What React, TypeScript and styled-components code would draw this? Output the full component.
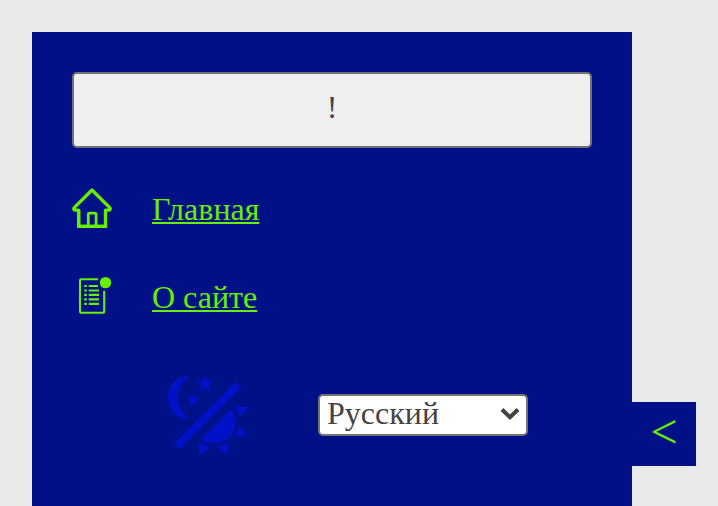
import React from "react";
import styled, { createGlobalStyle } from "styled-components";

const GlobalStyle = createGlobalStyle`
  *, *::before, *::after { box-sizing: border-box; }
  body {
    margin: 0;
    background: #eaeaea;
    font-family: "Liberation Serif", "Times New Roman", serif;
    font-size: 32px;
    color: #444;
    overflow: hidden;
  }
`;

const Page = styled.div`
  display: flex;
  align-items: flex-start;
  height: 506px;
  padding: 32px 0 0 32px;
`;

const Panel = styled.aside`
  display: flex;
  flex-direction: column;
  gap: 40px;
  width: 600px;
  height: 474px;
  padding: 40px;
  background: #001087;
`;

const AlertButton = styled.button`
  flex: none;
  height: 76px;
  padding: 0 0 6px;
  border: 2px solid #737373;
  border-radius: 5px;
  background: #efefef;
  color: #444;
  font: inherit;
`;

const Nav = styled.nav`
  display: flex;
  flex-direction: column;
  gap: 48px;
  color: #66f000;
`;

const NavRow = styled.div`
  display: flex;
  align-items: center;
  gap: 40px;
  height: 40px;

  svg { display: block; flex: none; }
`;

const NavLink = styled.a`
  color: inherit;
  line-height: 36px;
  padding-top: 2px;
  text-decoration-thickness: 2px;
  text-underline-offset: 2px;
`;

const Settings = styled.div`
  display: flex;
  align-items: center;
  gap: 70px;
  margin-top: 19px;
  padding-left: 96px;

  svg { display: block; }
`;

const ThemeIcon = styled.svg`
  flex: none;
  fill: #0011c8;
`;

const LanguageSelect = styled.button`
  display: flex;
  align-items: center;
  justify-content: space-between;
  width: 210px;
  height: 42px;
  padding: 0 6px 4px 7px;
  border: 2px solid #737373;
  border-radius: 5px;
  background: #fff;
  color: #444;
  font: inherit;
  text-align: left;

  svg { position: relative; top: 1px; }
`;

const CollapseTab = styled.button`
  display: flex;
  align-items: center;
  justify-content: center;
  width: 64px;
  height: 64px;
  margin-top: 370px;
  padding: 0 0 4px;
  border: 0;
  background: #001087;
  color: #66f000;
  font: inherit;
  font-size: 48px;
  line-height: 56px;
`;

const HomeIcon = () => (
  <svg width="40" height="40" viewBox="0 0 40 40" fill="none" stroke="currentColor" strokeWidth="3.2">
    <path d="M6.7 22.2H3.2Q1.4 22.2 1.8 20.2L20 2L38.2 20.2Q38.6 22.2 36.8 22.2H33.5V38.4H6.7Z" strokeLinejoin="round" />
    <path d="M6.7 22V38.4H33.5V22" />
    <path d="M16.3 38V26.5Q16.3 25.2 17.6 25.2H22.8Q24.1 25.2 24.1 26.5V38" strokeWidth="2.8" />
  </svg>
);

const ArticleIcon = () => (
  <svg width="40" height="40" viewBox="0 0 40 40" fill="none" stroke="currentColor" strokeWidth="2.1">
    <path d="M26 3.2H9.5Q8 3.2 8 4.7V35.2Q8 36.7 9.5 36.7H30.7Q32.2 36.7 32.2 35.2V14.7" />
    <path d="M12.2 10H14.8M12.2 14.5H14.8M12.2 18.8H14.8M12.2 23.3H14.8M12.2 27.8H14.8M16.7 10H26M16.7 14.5H27M16.7 18.8H27M16.7 23.3H27M16.7 27.8H27" strokeWidth="2.2" />
    <circle cx="33.5" cy="6.6" r="5.7" fill="currentColor" stroke="none" />
  </svg>
);

const DayNightIcon = () => (
  <ThemeIcon width="80" height="80" viewBox="0 0 80 80">
    <path d="M22.5 1C9 .2 0 10 0 22.5C0 35 10 45.5 22 44C14 39 10 31 10 22.5C10 14 14 6 22.5 1Z" />
    <path d="M37.2 .5L39.5 6.5L46 6.2L41.2 10.5L43.5 17L37.3 13.3L31.5 17L33.2 10.3L28 6L34.8 6Z" />
    <path d="M25.4 17.2L27.2 22.2L32.2 22.5L28.2 25.8L29.9 31.3L25.4 28.3L20.5 31.3L22 25.8L18 22.5L23.3 22.2Z" />
    <path d="M67.5 7L73 12.5L11.5 74.2L6 68.5Z" />
    <path d="M63.3 34C70 43 69 55 61.5 62C54 69.5 41 70.5 32.5 64.5Z" />
    <path d="M67 31L80.5 32L71.5 42Z" />
    <path d="M71.5 50.8L79.5 61L67 61.7Z" />
    <path d="M30.3 68L42 72.3L31.3 81Z" />
    <path d="M49.5 72.3L60.7 68L60 81Z" />
  </ThemeIcon>
);

export default function App() {
  return (
    <>
      <GlobalStyle />
      <Page>
        <Panel>
          <AlertButton type="button">!</AlertButton>
          <Nav>
            <NavRow>
              <HomeIcon />
              <NavLink href="#home">Главная</NavLink>
            </NavRow>
            <NavRow>
              <ArticleIcon />
              <NavLink href="#about">О сайте</NavLink>
            </NavRow>
          </Nav>
          <Settings>
            <DayNightIcon />
            <LanguageSelect type="button" aria-haspopup="listbox">
              Русский
              <svg width="20" height="14" viewBox="0 0 20 14" fill="none" stroke="#444" strokeWidth="4">
                <path d="M2 2.5L10 10.3L18 2.5" />
              </svg>
            </LanguageSelect>
          </Settings>
        </Panel>
        <CollapseTab type="button">&lt;</CollapseTab>
      </Page>
    </>
  );
}
